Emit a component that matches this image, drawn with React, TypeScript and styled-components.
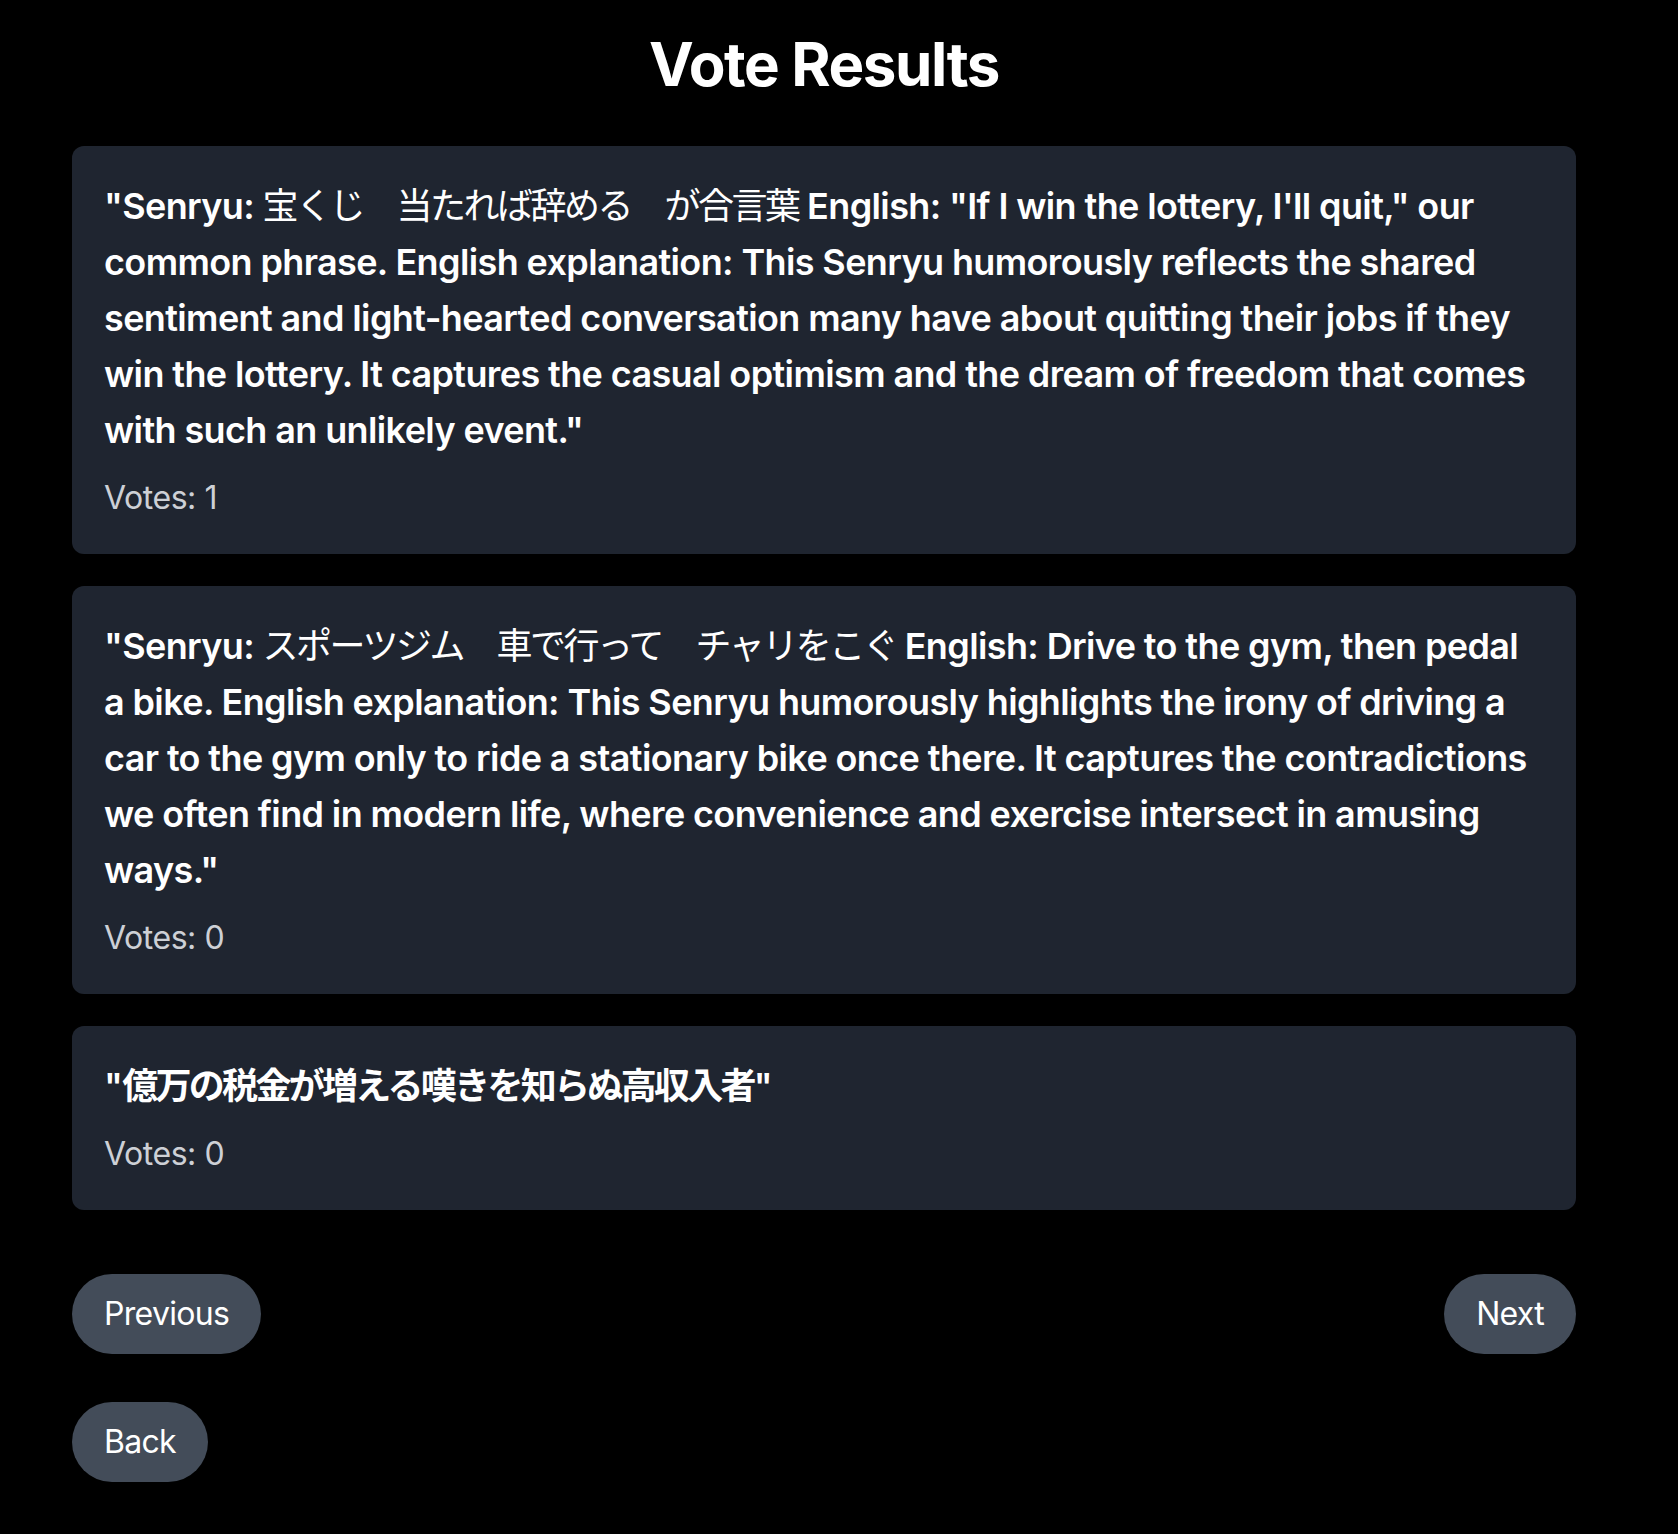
import React from "react";
import styled, { createGlobalStyle } from "styled-components";

const GlobalStyle = createGlobalStyle`
  html, body {
    margin: 0;
    padding: 0;
    background: #000000;
  }
  body {
    font-family: Inter, "Noto Sans CJK JP", "Noto Sans", sans-serif;
    color: #ffffff;
  }
  * { box-sizing: border-box; }
`;

const Page = styled.main`
  min-height: 1534px;
  background: #000000;
  padding: 28px 102px 48px 72px;
  display: flex;
  flex-direction: column;
`;

const Title = styled.h1`
  margin: 0 0 46px;
  font-size: 60px;
  line-height: 72px;
  font-weight: 700;
  text-align: center;
  color: #ffffff;
  letter-spacing: -1.4px;
`;

const List = styled.section`
  display: flex;
  flex-direction: column;
  gap: 32px;
`;

const Card = styled.article`
  background: #1f2530;
  border-radius: 12px;
  padding: 32px;
`;

const Quote = styled.p`
  margin: 0;
  font-size: 36px;
  line-height: 56px;
  font-weight: 600;
  color: #ffffff;
  letter-spacing: -0.62px;
`;

const Jp = styled.span<{ $bold?: boolean }>`
  font-family: "Noto Sans CJK JP", sans-serif;
  font-weight: ${(p) => (p.$bold ? 700 : 400)};
  letter-spacing: ${(p) => (p.$bold ? "-2.7px" : "-2.5px")};
  line-height: 1;
`;

const Votes = styled.p`
  margin: 16px 0 0;
  font-size: 32px;
  line-height: 48px;
  font-weight: 400;
  color: #cdd0d6;
  letter-spacing: -0.45px;
`;

const NavRow = styled.nav`
  margin-top: 64px;
  display: flex;
  justify-content: space-between;
  align-items: center;
`;

const PillButton = styled.button`
  appearance: none;
  border: none;
  background: #434c59;
  color: #ffffff;
  font-family: Inter, "Noto Sans", sans-serif;
  font-size: 32px;
  line-height: 48px;
  font-weight: 400;
  letter-spacing: -0.7px;
  padding: 16px 32px;
  border-radius: 9999px;
  cursor: pointer;
`;

const BackRow = styled.div`
  margin-top: 48px;
  display: flex;
`;

type Part = { jp?: boolean; t: string };

const results: { parts: Part[]; votes: number; boldJp?: boolean }[] = [
  {
    parts: [
      { t: "\"Senryu: " },
      { jp: true, t: "宝くじ　当たれば辞める　が合言葉" },
      {
        t: " English: \"If I win the lottery, I'll quit,\" our common phrase. English explanation: This Senryu humorously reflects the shared sentiment and light-hearted conversation many have about quitting their jobs if they win the lottery. It captures the casual optimism and the dream of freedom that comes with such an unlikely event.\"",
      },
    ],
    votes: 1,
  },
  {
    parts: [
      { t: "\"Senryu: " },
      { jp: true, t: "スポーツジム　車で行って　チャリをこぐ" },
      {
        t: " English: Drive to the gym, then pedal a bike. English explanation: This Senryu humorously highlights the irony of driving a car to the gym only to ride a stationary bike once there. It captures the contradictions we often find in modern life, where convenience and exercise intersect in amusing ways.\"",
      },
    ],
    votes: 0,
  },
  {
    parts: [
      { t: "\"" },
      { jp: true, t: "億万の税金が増える嘆きを知らぬ高収入者" },
      { t: "\"" },
    ],
    votes: 0,
    boldJp: true,
  },
];

export default function App() {
  return (
    <>
      <GlobalStyle />
      <Page>
        <Title>Vote Results</Title>
        <List>
          {results.map((r, i) => (
            <Card key={i}>
              <Quote>
                {r.parts.map((p, j) =>
                  p.jp ? (
                    <Jp key={j} $bold={r.boldJp}>
                      {p.t}
                    </Jp>
                  ) : (
                    <React.Fragment key={j}>{p.t}</React.Fragment>
                  )
                )}
              </Quote>
              <Votes>Votes: {r.votes}</Votes>
            </Card>
          ))}
        </List>
        <NavRow>
          <PillButton>Previous</PillButton>
          <PillButton>Next</PillButton>
        </NavRow>
        <BackRow>
          <PillButton>Back</PillButton>
        </BackRow>
      </Page>
    </>
  );
}
